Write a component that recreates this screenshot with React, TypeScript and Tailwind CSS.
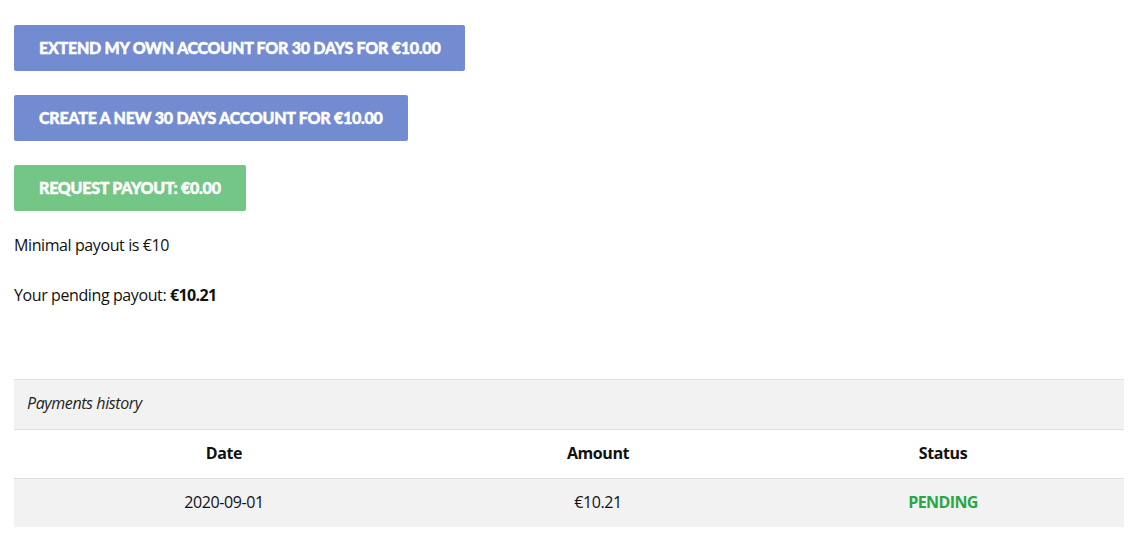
import React from "react";

const btnFont = { fontFamily: "Lato, 'Noto Sans', sans-serif" };
const btn =
  "h-[46px] rounded-[2px] px-[25px] text-[16px] font-black uppercase tracking-[-0.25px] text-white [-webkit-text-stroke:0.45px_white]";

export default function App() {
  return (
    <div
      className="min-h-[538px] bg-white px-[14px] pt-[25px] text-[16px] tracking-[-0.4px] text-[#111]"
      style={{ fontFamily: "'Open Sans', 'Noto Sans', sans-serif" }}
    >
      <div className="flex flex-col items-start gap-[24px]">
        <button className={`${btn} bg-[#728bd1]`} style={btnFont}>
          Extend my own account for 30 days for €10.00
        </button>
        <button className={`${btn} bg-[#728bd1]`} style={btnFont}>
          Create a new 30 days account for €10.00
        </button>
        <button className={`${btn} bg-[#74c686]`} style={btnFont}>
          Request payout: €0.00
        </button>
      </div>
      <p className="mt-[22px] leading-[24px]">Minimal payout is €10</p>
      <p className="mt-[26px] leading-[24px]">
        Your pending payout: <b className="tracking-[-0.6px]">€10.21</b>
      </p>
      <div className="mt-[72px] w-[1110px] border-t border-[#e0e0e0]">
        <div className="flex h-[49px] items-center bg-[#f2f2f2] px-[13px] pb-[3px] italic text-[#222]">
          Payments history
        </div>
        <div className="grid h-[49px] grid-cols-[420px_328px_362px] items-center border-t border-[#e0e0e0] pb-[3px] font-bold">
          <div className="text-center">Date</div>
          <div className="text-center">Amount</div>
          <div className="text-center">Status</div>
        </div>
        <div className="grid h-[49px] grid-cols-[420px_328px_362px] items-center border-t border-[#e0e0e0] bg-[#f2f2f2] pb-[3px]">
          <div className="text-center">2020-09-01</div>
          <div className="text-center">€10.21</div>
          <div className="text-center font-bold tracking-[-0.6px] text-[#28a745]">PENDING</div>
        </div>
      </div>
    </div>
  );
}
